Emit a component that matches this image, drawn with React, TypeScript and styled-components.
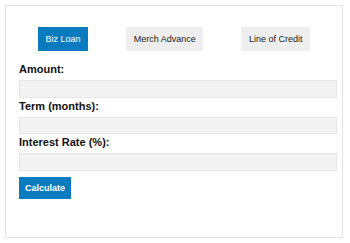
import React, { useState } from "react";
import styled, { createGlobalStyle } from "styled-components";

const Global = createGlobalStyle`
  html, body { margin: 0; padding: 0; background: #ffffff; }
  body { font-family: "Liberation Sans", Arial, sans-serif; }
`;

const Card = styled.div`
  box-sizing: border-box;
  width: 338px;
  margin: 5px;
  border: 1px solid #e3e3e3;
  padding: 21px 13px 38px 13px;
  background: #fff;
`;

const Tabs = styled.div`
  display: flex;
  justify-content: space-around;
  margin-bottom: 12px;
`;

const Tab = styled.button<{ $active?: boolean }>`
  box-sizing: border-box;
  height: 24px;
  padding: 0 7.5px;
  border: none;
  font-family: "Liberation Sans", Arial, sans-serif;
  font-size: 9px;
  background: ${(p) => (p.$active ? "#0a7bbf" : "#eeeeee")};
  color: ${(p) => (p.$active ? "#ffffff" : "#1a1a1a")};
  cursor: pointer;
`;

const Field = styled.div`
  display: flex;
  flex-direction: column;
  margin-bottom: 2px;
`;

const Label = styled.label`
  display: block;
  font-size: 11px;
  font-weight: bold;
  line-height: 13px;
  color: #111;
  margin-bottom: 4px;
`;

const Input = styled.input`
  box-sizing: content-box;
  width: 100%;
  height: 15.5px;
  padding: 0 3px;
  border: 1px solid #e6e6e6;
  background: #f3f3f3;
  font-family: "Liberation Sans", Arial, sans-serif;
  font-size: 9px;
  outline: none;
`;

const Submit = styled.button`
  box-sizing: border-box;
  margin-top: 4.5px;
  height: 22px;
  padding: 0 6px;
  border: none;
  background: #0a7bbf;
  color: #fff;
  font-family: "Liberation Sans", Arial, sans-serif;
  font-size: 9px;
  font-weight: bold;
  cursor: pointer;
`;

const tabs = ["Biz Loan", "Merch Advance", "Line of Credit"];
const fields = ["Amount:", "Term (months):", "Interest Rate (%):"];

export default function App() {
  const [active, setActive] = useState(0);
  return (
    <>
      <Global />
      <Card>
        <Tabs>
          {tabs.map((t, i) => (
            <Tab key={t} $active={i === active} onClick={() => setActive(i)}>
              {t}
            </Tab>
          ))}
        </Tabs>
        {fields.map((f) => (
          <Field key={f}>
            <Label>{f}</Label>
            <Input type="text" />
          </Field>
        ))}
        <Submit>Calculate</Submit>
      </Card>
    </>
  );
}
